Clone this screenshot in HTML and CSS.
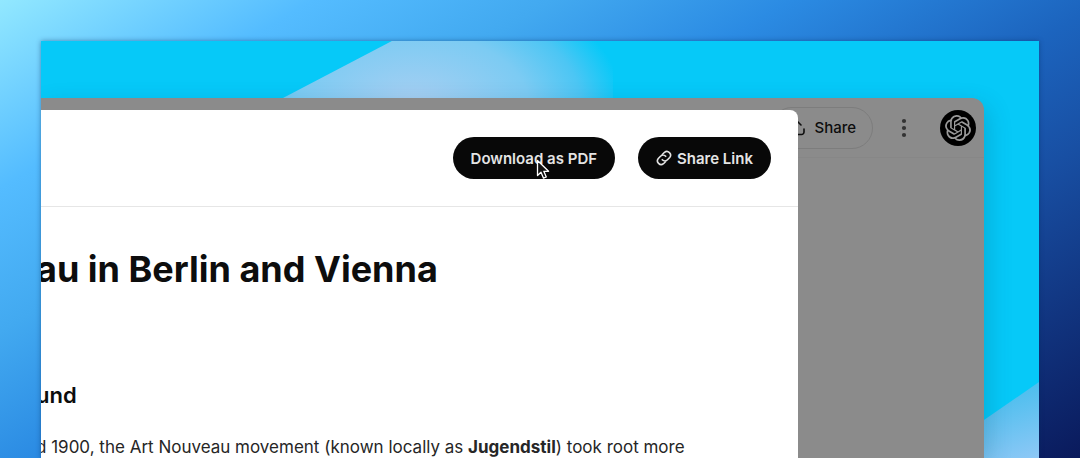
FILE: index.html
```html
<!DOCTYPE html>
<html lang="en">
  <head>
    <meta charset="UTF-8" />
    <meta name="viewport" content="width=device-width, initial-scale=1.0" />
    <title>Art Nouveau in Berlin and Vienna</title>
    <link rel="stylesheet" href="styles.css" />
  </head>
  <body>
    <div class="desktop">
      <div class="window">
        <!-- app header, dimmed behind the dialog -->
        <header class="topbar">
          <button class="btn-share" type="button">
            <svg width="18" height="18" viewBox="0 0 18 18" fill="none" stroke="currentColor" stroke-width="1.6" stroke-linecap="round" stroke-linejoin="round">
              <path d="M9 11V2M5 6l4-4 4 4M2 10v3a2.500 2.500 0 0 0 2.500 2.500h9a2.500 2.500 0 0 0 2.500-2.500v-3" />
            </svg>
            Share
          </button>
          <button class="btn-more" type="button" aria-label="More">
            <svg width="6" height="20" viewBox="0 0 6 20" fill="currentColor">
              <circle cx="3" cy="3" r="2.100" />
              <circle cx="3" cy="10" r="2.100" />
              <circle cx="3" cy="17" r="2.100" />
            </svg>
          </button>
          <button class="avatar" type="button" aria-label="Account">
            <svg width="26" height="26" viewBox="0 0 24 24" fill="currentColor">
              <path d="M22.2819 9.8211a5.9847 5.9847 0 0 0-.5157-4.9108 6.0462 6.0462 0 0 0-6.5098-2.9A6.0651 6.0651 0 0 0 4.9807 4.1818a5.9847 5.9847 0 0 0-3.9977 2.9 6.0462 6.0462 0 0 0 .7427 7.0966 5.98 5.98 0 0 0 .511 4.9107 6.051 6.051 0 0 0 6.5146 2.9001A5.9847 5.9847 0 0 0 13.2599 24a6.0557 6.0557 0 0 0 5.7718-4.2058 5.9894 5.9894 0 0 0 3.9977-2.9001 6.0557 6.0557 0 0 0-.7475-7.0729zm-9.022 12.6081a4.4755 4.4755 0 0 1-2.8764-1.0408l.1419-.0804 4.7783-2.7582a.7948.7948 0 0 0 .3927-.6813v-6.7369l2.02 1.1686a.071.071 0 0 1 .038.052v5.5826a4.504 4.504 0 0 1-4.4945 4.4944zm-9.6607-4.1254a4.4708 4.4708 0 0 1-.5346-3.0137l.142.0852 4.783 2.7582a.7712.7712 0 0 0 .7806 0l5.8428-3.3685v2.3324a.0804.0804 0 0 1-.0332.0615L9.74 19.9502a4.4992 4.4992 0 0 1-6.1408-1.6464zM2.3408 7.8956a4.485 4.485 0 0 1 2.3655-1.9728V11.6a.7664.7664 0 0 0 .3879.6765l5.8144 3.3543-2.0201 1.1685a.0757.0757 0 0 1-.071 0l-4.8303-2.7865A4.504 4.504 0 0 1 2.3408 7.872zm16.5963 3.8558L13.1038 8.364 15.1192 7.2a.0757.0757 0 0 1 .071 0l4.8303 2.7913a4.4944 4.4944 0 0 1-.6765 8.1042v-5.6772a.79.79 0 0 0-.407-.667zm2.0107-3.0231l-.142-.0852-4.7735-2.7818a.7759.7759 0 0 0-.7854 0L9.409 9.2297V6.8974a.0662.0662 0 0 1 .0284-.0615l4.8303-2.7866a4.4992 4.4992 0 0 1 6.6802 4.66zM8.3065 12.863l-2.02-1.1638a.0804.0804 0 0 1-.038-.0567V6.0742a4.4992 4.4992 0 0 1 7.3757-3.4537l-.142.0805L8.704 5.459a.7948.7948 0 0 0-.3927.6813zm1.0976-2.3654l2.602-1.4998 2.6069 1.4998v2.9994l-2.5974 1.4997-2.6067-1.4997Z" />
            </svg>
          </button>
        </header>

        <!-- report dialog -->
        <section class="dialog">
          <div class="dialog-header">
            <button class="btn" type="button">
              Download as PDF
              <svg class="cursor" width="14" height="21" viewBox="0 0 14 21">
                <path d="M1.500 1.500v15l3.500-3.300 2.500 6 2.800-1.200-2.500-5.700h4.800z" fill="#111" stroke="#fff" stroke-width="1.3" stroke-linejoin="round" />
              </svg>
            </button>
            <button class="btn" type="button">
              <svg width="16" height="16" viewBox="0 0 16 16" fill="none" stroke="currentColor" stroke-width="1.6" stroke-linecap="round">
                <path d="M6.300 4.500l2.200-2.200a3.700 3.700 0 0 1 5.200 5.200L11.500 9.700a3.700 3.700 0 0 1-5.200 0M9.700 11.500l-2.200 2.200a3.700 3.700 0 0 1-5.200-5.200L4.500 6.300a3.700 3.700 0 0 1 5.200 0" />
              </svg>
              Share Link
            </button>
          </div>
          <article class="report">
            <h1>au in Berlin and Vienna</h1>
            <h2>und</h2>
            <p>d 1900, the Art Nouveau movement (known locally as <strong>Jugendstil</strong>) took root more</p>
          </article>
        </section>
      </div>
    </div>
  </body>
</html>
```
FILE: styles.css
```css
* {
  margin: 0;
  padding: 0;
  box-sizing: border-box;
}
body {
  display: flex;
  min-height: 100vh;
  padding: 41px 41px 0;
  overflow: hidden;
  font-family: Inter, "Liberation Sans", sans-serif;
  color: #0d0d0d;
  background: linear-gradient(149deg, #92e8ff 0%, #54bcff 17%, #42a9f0 30%, #2b8be3 43%, #1c64be 60%, #184fa3 72%, #0a1a5c 100%);
}
button {
  border: none;
  background: none;
  font: inherit;
  color: inherit;
}
.desktop {
  position: relative;
  flex: 1;
  display: flex;
  padding: 57px 55px 0 0;
  overflow: hidden;
  background: #06c9f8;
  box-shadow: 0 0 5px rgba(0, 40, 90, 0.45);
}
/* light folds of the wallpaper */
.desktop::before,
.desktop::after {
  content: "";
  position: absolute;
}
.desktop::before {
  top: 0;
  left: 242px;
  width: 330px;
  height: 57px;
  clip-path: polygon(33% 0, 100% 0, 100% 100%, 0 100%);
  background: radial-gradient(ellipse 210px 130px at 130px 64px, #a8cff2 0%, #7ccbf3 55%, #4cc6f4 80%, #06c9f8 100%);
}
.desktop::after {
  right: 0;
  bottom: 0;
  width: 55px;
  height: 76px;
  clip-path: polygon(100% 0, 100% 100%, 0 100%, 0 50%);
  background: linear-gradient(160deg, #3cbcec, #8ec8f6);
}
.window {
  position: relative;
  z-index: 1;
  flex: 1;
  background: #8b8b8b;
  border-top-right-radius: 12px;
  box-shadow: 4px 8px 24px rgba(0, 60, 90, 0.2);
}
.topbar {
  display: flex;
  justify-content: flex-end;
  align-items: center;
  height: 60px;
  padding-right: 8px;
  border-bottom: 1px solid #878787;
}
.btn-share {
  display: flex;
  align-items: center;
  gap: 8px;
  height: 42px;
  padding: 0 16px;
  border: 1px solid #7d7d7d;
  border-radius: 21px;
  font-size: 15px;
  font-weight: 500;
}
.btn-more {
  display: flex;
  justify-content: center;
  width: 62px;
  color: #333;
}
.avatar {
  display: flex;
  justify-content: center;
  align-items: center;
  width: 36px;
  height: 36px;
  margin-left: 5px;
  border-radius: 50%;
  background: #000;
  color: #999;
}
.dialog {
  position: absolute;
  top: 12px;
  right: 186px;
  bottom: 0;
  left: 0;
  overflow: hidden;
  background: #fff;
  border-top-right-radius: 8px;
}
.dialog-header {
  display: flex;
  justify-content: flex-end;
  align-items: center;
  gap: 23px;
  height: 97px;
  padding-right: 27px;
  border-bottom: 1px solid #e6e6e6;
}
.btn {
  position: relative;
  display: flex;
  align-items: center;
  gap: 5px;
  height: 42px;
  padding: 0 18px;
  border-radius: 21px;
  background: #080808;
  color: #e4e4e4;
  font-size: 15px;
  font-weight: 600;
}
.cursor {
  position: absolute;
  top: 22px;
  left: 83px;
}
.report {
  margin-left: -5px;
  padding-top: 38px;
  white-space: nowrap;
}
.report h1 {
  font-size: 36px;
  font-weight: 700;
  line-height: 48px;
}
.report h2 {
  margin-top: 87px;
  font-size: 22px;
  font-weight: 600;
  line-height: 30px;
}
.report p {
  margin-top: 24px;
  font-size: 17px;
  line-height: 26px;
  color: #262626;
}
```
